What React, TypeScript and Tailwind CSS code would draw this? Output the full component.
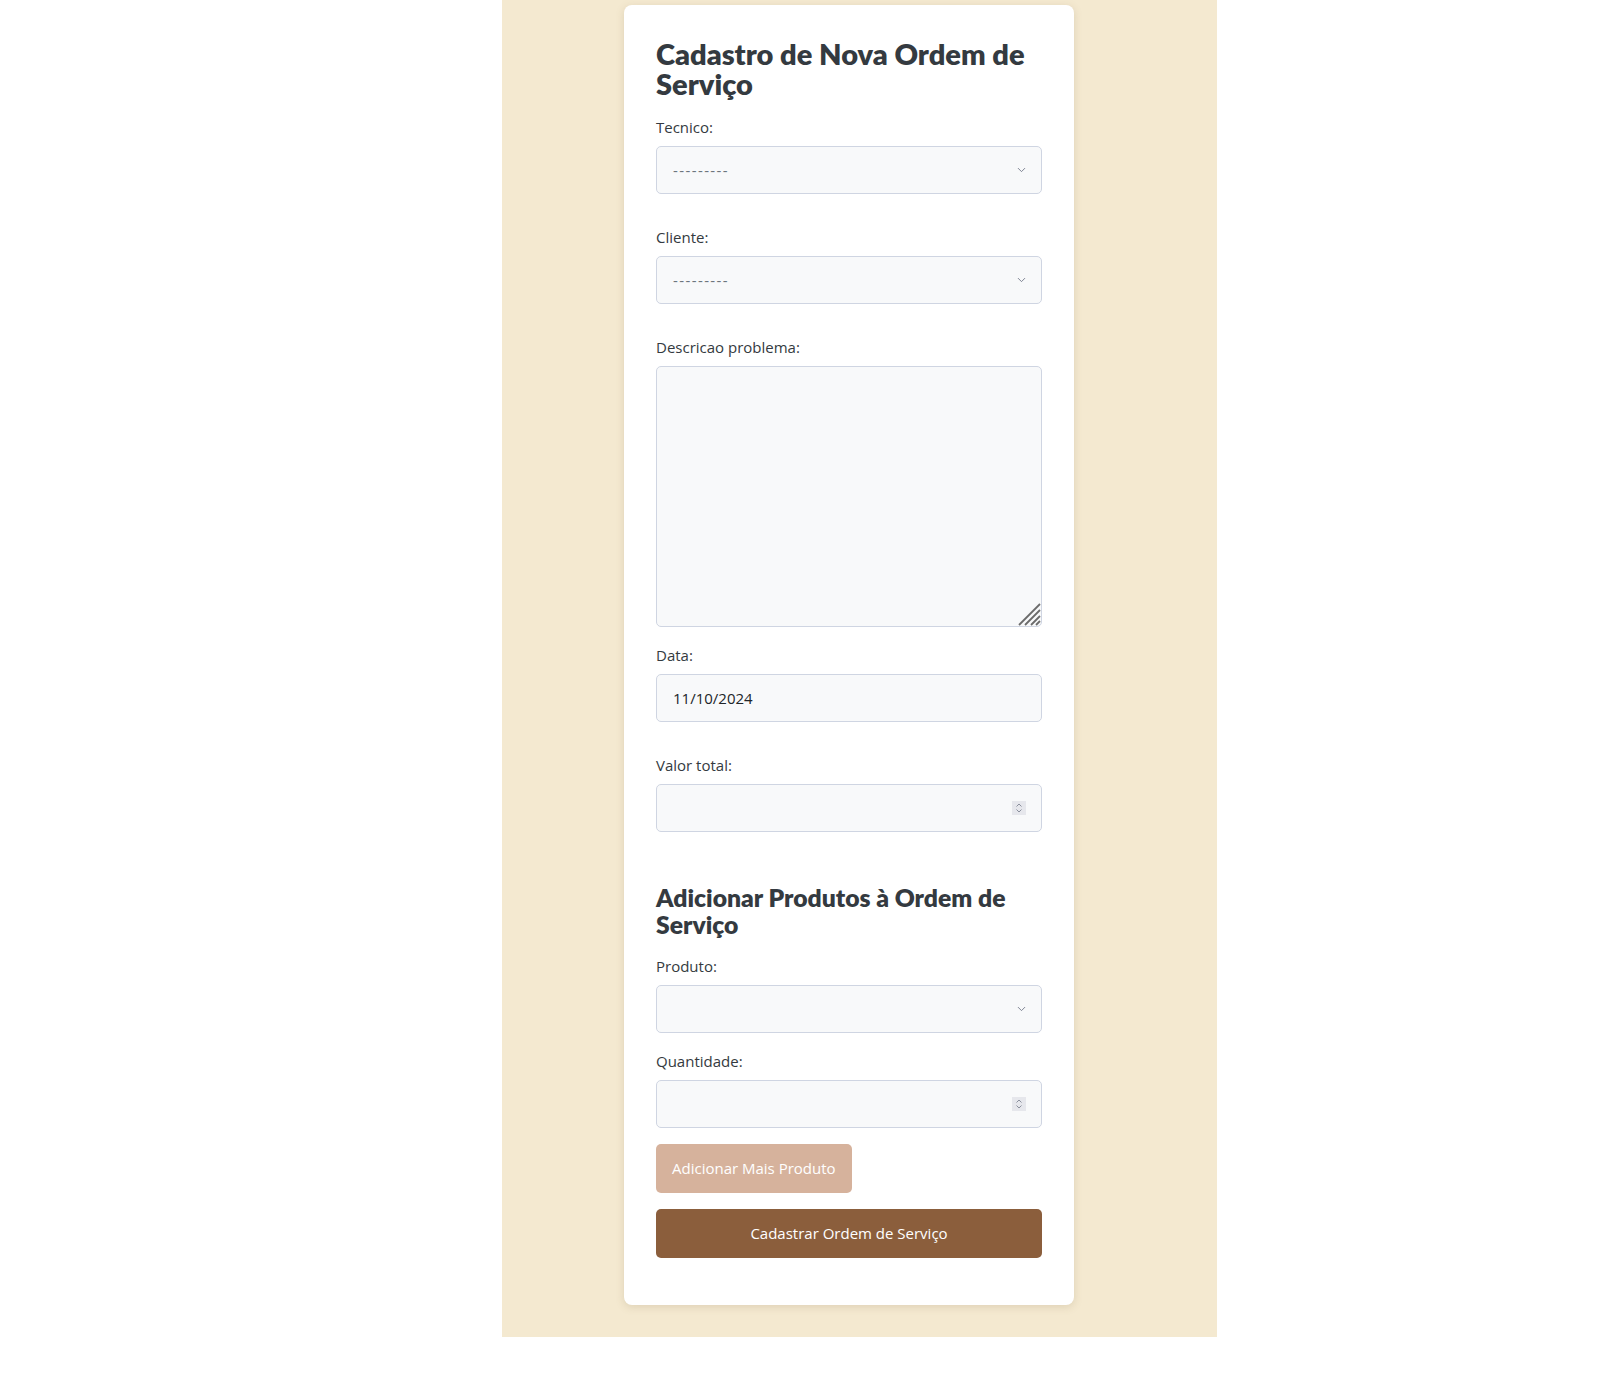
import { ChevronDown } from "lucide-react"

const body = { fontFamily: '"Open Sans", "Noto Sans", sans-serif' }
const head = { fontFamily: 'Lato, "Open Sans", sans-serif' }

function Label({ children, className = "" }: { children: string; className?: string }) {
  return <label className={`block text-[15px] leading-[21px] text-[#343a40] mb-2 ${className}`}>{children}</label>
}

function SelectField({ value }: { value: string }) {
  return (
    <div className="relative">
      <select
        defaultValue={value}
        className="block w-full h-12 appearance-none rounded-[5px] border border-[#cfd5e2] bg-[#f8f9fa] pl-4 pr-10 text-[15px] tracking-[1.4px] text-[#6c757d] outline-none"
      >
        <option value={value}>{value}</option>
      </select>
      <ChevronDown className="pointer-events-none absolute right-[14px] top-1/2 h-[13px] w-[13px] -translate-y-1/2 text-[#737989]" strokeWidth={1.7} />
    </div>
  )
}

function NumberField() {
  return (
    <div className="relative">
      <input className="block w-full h-12 rounded-[5px] border border-[#cfd5e2] bg-[#f8f9fa] px-4 text-[15px] outline-none" />
      <span className="pointer-events-none absolute right-[16px] top-1/2 flex h-[14px] w-[14px] -translate-y-1/2 flex-col items-center justify-center bg-[#e6e7ec]">
        <svg width="8" height="12" viewBox="0 0 8 12" fill="none" stroke="#8a8f9c" strokeWidth="1">
          <path d="M1.5 4.5 4 2l2.5 2.5" />
          <path d="M1.5 7.5 4 10l2.5-2.5" />
        </svg>
      </span>
    </div>
  )
}

export default function App() {
  return (
    <div className="min-h-screen bg-white" style={body}>
      <div className="ml-[502px] w-[715px] bg-[#f4e9d0] pt-[5px] pb-8">
        <div className="ml-[122px] w-[450px] rounded-lg bg-white px-8 pt-8 pb-8 shadow-[0_2px_8px_rgba(120,100,60,0.18)]">
          <h1 className="mt-[2px] mb-[18px] text-[29px] leading-[30px] font-extrabold text-[#343a40]" style={head}>
            Cadastro de Nova Ordem de Serviço
          </h1>

          <Label>Tecnico:</Label>
          <SelectField value="---------" />

          <Label className="mt-[33px]">Cliente:</Label>
          <SelectField value="---------" />

          <Label className="mt-[33px]">Descricao problema:</Label>
          <div className="relative">
            <textarea className="block h-[261px] w-full resize-none rounded-[5px] border border-[#cfd5e2] bg-[#f8f9fa] p-4 outline-none" />
            <svg className="pointer-events-none absolute right-[1px] bottom-[1px]" width="23" height="23" viewBox="0 0 23 23" stroke="#6b6b6b" strokeWidth="1.8">
              <path d="M1 22 22 1" />
              <path d="M7 22 22 7" />
              <path d="M13 22 22 13" />
              <path d="M18 22 22 18" />
            </svg>
          </div>

          <Label className="mt-[18px]">Data:</Label>
          <input
            defaultValue="11/10/2024"
            className="block h-12 w-full rounded-[5px] border border-[#cfd5e2] bg-[#f8f9fa] px-4 text-[15px] text-[#212529] outline-none"
          />

          <Label className="mt-[33px]">Valor total:</Label>
          <NumberField />

          <h2 className="mt-[52px] mb-[18px] text-[24.7px] leading-[27px] font-extrabold text-[#343a40]" style={head}>
            Adicionar Produtos à Ordem de Serviço
          </h2>

          <Label>Produto:</Label>
          <SelectField value="" />

          <Label className="mt-[18px]">Quantidade:</Label>
          <NumberField />

          <button className="mt-4 block h-[49px] rounded-[5px] bg-[#d6b29c] px-4 text-[15px] text-white">
            Adicionar Mais Produto
          </button>
          <button className="mt-4 mb-[15px] block h-[49px] w-full rounded-[5px] bg-[#8b5e3c] text-[15px] text-white">
            Cadastrar Ordem de Serviço
          </button>
        </div>
      </div>
    </div>
  )
}
